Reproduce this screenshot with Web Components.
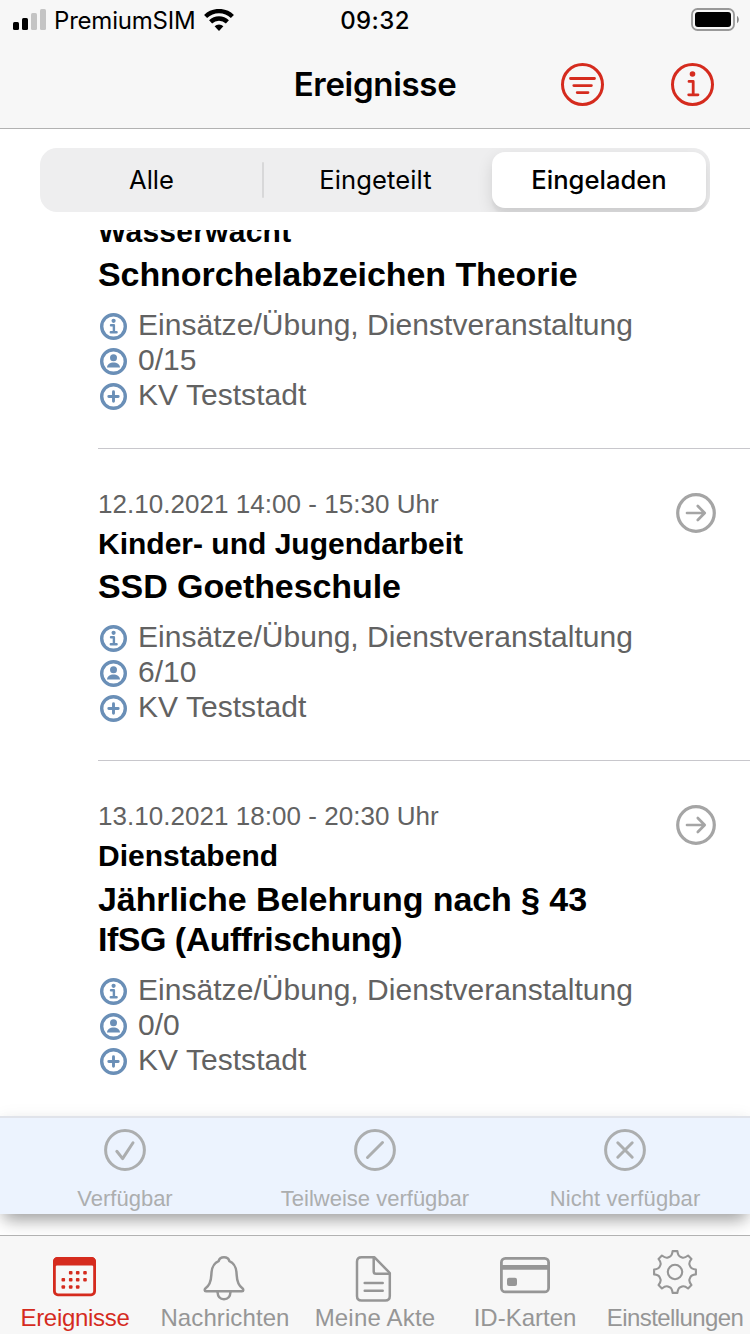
<!DOCTYPE html>
<html lang="de">
<head>
<meta charset="utf-8">
<title>Ereignisse</title>
<style>
  body {
    margin: 0;
    background: #fff;
    font-family: "Liberation Sans", Arial, sans-serif;
  }
</style>
</head>
<body>
<events-app>
  <status-bar slot="top" carrier="PremiumSIM" time="09:32"></status-bar>
  <nav-bar slot="top">Ereignisse</nav-bar>
  <segmented-control slot="filter">
    <segment-item>Alle</segment-item>
    <segment-item divider>Eingeteilt</segment-item>
    <segment-item selected>Eingeladen</segment-item>
  </segmented-control>

  <event-item>
    <span slot="category" style="letter-spacing: 0.25px">Wasserwacht</span>
    <span slot="title">Schnorchelabzeichen Theorie</span>
    <event-info icon="info">Einsätze/Übung, Dienstveranstaltung</event-info>
    <event-info icon="person">0/15</event-info>
    <event-info icon="plus">KV Teststadt</event-info>
  </event-item>
  <event-item date="12.10.2021 14:00 - 15:30 Uhr">
    <span slot="category">Kinder- und Jugendarbeit</span>
    <span slot="title">SSD Goetheschule</span>
    <event-info icon="info">Einsätze/Übung, Dienstveranstaltung</event-info>
    <event-info icon="person">6/10</event-info>
    <event-info icon="plus">KV Teststadt</event-info>
  </event-item>
  <event-item date="13.10.2021 18:00 - 20:30 Uhr" last>
    <span slot="category">Dienstabend</span>
    <span slot="title">Jährliche Belehrung nach § 43<br><span style="letter-spacing: -0.5px">IfSG (Auffrischung)</span></span>
    <event-info icon="info">Einsätze/Übung, Dienstveranstaltung</event-info>
    <event-info icon="person">0/0</event-info>
    <event-info icon="plus">KV Teststadt</event-info>
  </event-item>

  <answer-bar slot="answers">
    <answer-button icon="yes">Verfügbar</answer-button>
    <answer-button icon="partly">Teilweise verfügbar</answer-button>
    <answer-button icon="no" style="letter-spacing: 0.1px">Nicht verfügbar</answer-button>
  </answer-bar>
  <tab-bar slot="tabs">
    <tab-item icon="calendar" style="letter-spacing: -0.3px" active>Ereignisse</tab-item>
    <tab-item icon="bell" style="letter-spacing: 0.1px">Nachrichten</tab-item>
    <tab-item icon="file" style="letter-spacing: 0.2px">Meine Akte</tab-item>
    <tab-item icon="card">ID-Karten</tab-item>
    <tab-item icon="gear" style="letter-spacing: -0.6px">Einstellungen</tab-item>
  </tab-bar>
</events-app>

<script>
"use strict";

// one gear tooth, rotated eight times around the centre
const gearPath = () => {
  const point = (x, y, deg) => {
    const a = deg * Math.PI / 180;
    const px = 25 + x * Math.cos(a) - y * Math.sin(a);
    const py = 24 + x * Math.sin(a) + y * Math.cos(a);
    return `${px.toFixed(2)} ${py.toFixed(2)}`;
  };
  let d = '';
  for (let i = 0; i < 8; i++) {
    const r = i * 45;
    d += `${i ? 'L' : 'M'}${point(-5.3, -15.3, r)}`;
    d += `Q${point(-3, -16.2, r)} ${point(-2.4, -20.9, r)}`;
    d += `L${point(2.4, -20.9, r)}`;
    d += `Q${point(3, -16.2, r)} ${point(5.3, -15.3, r)}`;
  }
  return d + 'Z';
};

const dots = [
  [20.7, 24.7], [27.7, 24.7], [35, 24.7],
  [13.3, 31.7], [20.7, 31.7], [27.7, 31.7], [35, 31.7],
  [13.3, 39], [20.7, 39], [27.7, 39],
].map(([x, y]) => `<rect x="${x - 1.8}" y="${y - 1.8}" width="3.6" height="3.6" rx="1"/>`).join('');

const svg = (w, h, body, stroke = 3) => `
  <svg width="${w}" height="${h}" viewBox="0 0 ${w} ${h}" fill="none" stroke="currentColor"
    stroke-width="${stroke}" stroke-linecap="round" stroke-linejoin="round" aria-hidden="true">${body}</svg>`;

const icons = {
  // list icons
  info: svg(27, 27, `
    <circle cx="13.5" cy="13.5" r="11.8"/>
    <circle cx="13.6" cy="7.8" r="2.1" fill="currentColor" stroke="none"/>
    <path d="M11 12.2h2.9v7M10.8 19.2h5.8" stroke-width="2.4"/>`, 3.4),
  person: svg(27, 27, `
    <circle cx="13.5" cy="13.5" r="11.8"/>
    <circle cx="13.5" cy="9.7" r="3.5" fill="currentColor" stroke="none"/>
    <path d="M7 19.5c.3-3.3 3-5 6.5-5s6.2 1.700 6.500 5z" fill="currentColor" stroke="none"/>`, 3.4),
  plus: svg(27, 27, `
    <circle cx="13.5" cy="13.5" r="11.8"/>
    <path d="M13.5 8.8v9.4M8.8 13.5h9.4" stroke-width="2.9"/>`, 3.4),
  arrow: svg(40, 40, `
    <circle cx="20" cy="20" r="18.3"/>
    <path d="M11 20h17.5M21.8 13l6.9 7-6.9 7" stroke-width="2.7"/>`, 3.2),
  // header icons
  filter: svg(43, 43, `
    <circle cx="21.5" cy="21.5" r="20"/>
    <path d="M9.5 15.5h24M12.8 22.6h17.6M16.2 29.6h10.8" stroke-width="2.8"/>`),
  about: svg(43, 43, `
    <circle cx="21.5" cy="21.5" r="20"/>
    <circle cx="21.5" cy="11" r="2.8" fill="currentColor" stroke="none"/>
    <path d="M18 18.4h4.2v13.4M17.7 31.8h9.3" stroke-width="2.8"/>`),
  // answer icons
  yes: svg(42, 42, `
    <circle cx="21" cy="21" r="19.4"/>
    <path d="M12.8 22.3l5.8 7.3L29 13.8"/>`),
  partly: svg(42, 42, `
    <circle cx="21" cy="21" r="19.4"/>
    <path d="M13.500 28.500l15-15"/>`),
  no: svg(42, 42, `
    <circle cx="21" cy="21" r="19.4"/>
    <path d="M13.800 13.800l14.400 14.400M28.200 13.800L13.800 28.200"/>`),
  // tab icons
  calendar: svg(50, 54, `
    <rect x="4.4" y="10.400" width="40.200" height="36.400" rx="3.500"/>
    <path d="M3 19v-5q0-5 5-5h33q5 0 5 5v5h-2q0-1.500-2-1.500H7q-2 0-2 1.500z" fill="currentColor" stroke="none"/>
    <g fill="currentColor" stroke="none">${dots}</g>`, 2.8),
  bell: svg(50, 54, `
    <path d="M6 43.200h36c1.700 0 1.600-2 .4-3-4.200-3-5.400-6.500-5.700-13-.3-8.500-2.500-12-7.300-14-.6-2.600-2.400-4-5.400-4s-4.800 1.400-5.400 4c-4.800 2-7 5.500-7.300 14-.3 6.500-1.500 10-5.700 13-1.200 1-1.300 3 .4 3z"/>
    <path d="M17.500 44c.3 4.600 2.800 7.200 6.500 7.200s6.200-2.600 6.500-7.200"/>`, 2.5),
  file: svg(50, 54, `
    <path d="M11.500 9.300h13L39.800 25v23q0 4.500-4.500 4.500H11.500Q7 52.500 7 48V13.800q0-4.500 4.500-4.500z"/>
    <path d="M23.700 10v13.500q0 2.300 2.300 2.300h13.500M14.700 35h18M14.700 42.800h18"/>`, 2.5),
  card: svg(50, 54, `
    <rect x="1.400" y="10.400" width="47.200" height="33.500" rx="4"/>
    <path d="M2 19.300h46" stroke-width="4.700" stroke-linecap="butt"/>
    <rect x="7" y="29.700" width="10" height="8.300" rx="2" fill="currentColor" stroke="none"/>`, 2.8),
  gear: svg(50, 54, `
    <path d="${gearPath()}"/>
    <circle cx="25" cy="24" r="7.200"/>`, 2.1),
};

class BaseElement extends HTMLElement {
  constructor() {
    super();
    this.attachShadow({mode: 'open'});
  }

  connectedCallback() {
    const template = document.createElement('template');
    template.innerHTML = this.render();
    this.shadowRoot.appendChild(template.content.cloneNode(true));
  }
}

class EventsApp extends BaseElement {
  render() {
    return `
      <style>
        :host {
          display: flex;
          flex-direction: column;
          width: 750px;
          height: 1334px;
          overflow: hidden;
        }
        .filter { padding: 19px 40px 18px; }
        .list {
          height: 886px;
          overflow: hidden;
        }
        /* the list is scrolled, its first row is cut at the top */
        .rows { margin-top: -18px; }
        .tabs { margin-top: auto; }
      </style>
      <slot name="top"></slot>
      <div class="filter"><slot name="filter"></slot></div>
      <div class="list"><div class="rows"><slot></slot></div></div>
      <slot name="answers"></slot>
      <div class="tabs"><slot name="tabs"></slot></div>
    `;
  }
}

class StatusBar extends BaseElement {
  render() {
    return `
      <style>
        :host {
          display: grid;
          grid-template-columns: 1fr auto 1fr;
          align-items: center;
          height: 38px;
          padding: 0 11px 2px 13px;
          background: #f7f7f7;
          font: 24px/38px Inter, sans-serif;
        }
        .left, .right { display: flex; align-items: center; }
        .left { gap: 8px; }
        .right { justify-content: flex-end; }
        .carrier { letter-spacing: -0.2px; padding-top: 2px; }
        .time { font-weight: 500; padding-top: 2px; margin-right: 2px; letter-spacing: 0.4px; }
        svg { display: block; }
      </style>
      <div class="left">
        <svg width="33" height="22" viewBox="0 0 33 22">
          <rect y="13" width="6" height="8" rx="1.5"/>
          <rect x="9" y="9" width="6" height="12" rx="1.5"/>
          <rect x="18" y="4" width="6" height="17" rx="1.5" fill="#c4c4c4"/>
          <rect x="27" y="0" width="6" height="21" rx="1.5" fill="#c4c4c4"/>
        </svg>
        <span class="carrier">${this.getAttribute('carrier')}</span>
        <svg width="30" height="22" viewBox="0 0 30 22" fill="none" stroke="#000" stroke-width="4.4">
          <path d="M1.6 7.500a19.300 19.300 0 0 1 26.800 0"/>
          <path d="M6.600 12.900a12.200 12.200 0 0 1 16.800 0"/>
          <path d="M15 22l-4.400-4.700a6.400 6.400 0 0 1 8.800 0z" fill="#000" stroke="none"/>
        </svg>
      </div>
      <span class="time">${this.getAttribute('time')}</span>
      <div class="right">
        <svg width="48" height="24" viewBox="0 0 48 24">
          <rect x="1" y="1" width="42" height="21" rx="5.5" fill="none" stroke="#999" stroke-width="1.8"/>
          <rect x="4" y="4" width="36" height="15" rx="3"/>
          <path d="M46 8c2.400 1.200 2.400 6 0 7.200z" fill="#888"/>
        </svg>
      </div>
    `;
  }
}

class NavBar extends BaseElement {
  render() {
    return `
      <style>
        :host {
          display: grid;
          grid-template-columns: 1fr auto 1fr;
          align-items: center;
          height: 88px;
          padding: 0 36px;
          background: #f7f7f7;
          border-bottom: 1px solid #b2b2b2;
        }
        h1 {
          grid-column: 2;
          margin: 0;
          font: 600 33px/40px Inter, sans-serif;
          letter-spacing: -0.3px;
        }
        .actions {
          display: flex;
          justify-content: flex-end;
          gap: 67px;
          color: #d52b1e;
        }
        svg { display: block; }
      </style>
      <h1><slot></slot></h1>
      <div class="actions">${icons.filter}${icons.about}</div>
    `;
  }
}

class SegmentedControl extends BaseElement {
  render() {
    return `
      <style>
        :host {
          display: flex;
          box-sizing: border-box;
          height: 64px;
          padding: 4px;
          border-radius: 17px;
          background: #eeeeef;
          overflow: hidden;
        }
      </style>
      <slot></slot>
    `;
  }
}

class SegmentItem extends BaseElement {
  render() {
    return `
      <style>
        :host {
          display: flex;
          box-sizing: border-box;
          flex: 1 1 0;
          align-items: center;
          padding-right: 3px;
          font: 25.6px/56px Inter, sans-serif;
        }
        :host([divider]) {
          flex: 0 0 230px;
          padding-right: 5px;
          letter-spacing: 0.1px;
        }
        :host([divider])::before {
          content: "";
          width: 2px;
          height: 36px;
          border-radius: 1px;
          background: #d8d8d9;
        }
        :host([selected]) {
          flex: 0 0 214px;
          padding-right: 0;
          border-radius: 13px;
          background: #fff;
          box-shadow: 0 6px 16px rgba(0, 0, 0, .12), 0 6px 2px rgba(0, 0, 0, .04);
          font-weight: 500;
        }
        .label { flex: 1; text-align: center; }
      </style>
      <span class="label"><slot></slot></span>
    `;
  }
}

class EventItem extends BaseElement {
  render() {
    const date = this.getAttribute('date');
    return `
      <style>
        :host {
          display: flex;
          justify-content: space-between;
          align-items: flex-start;
          margin-left: 98px;
          padding: 0 34px 36px 0;
          border-bottom: 1px solid #c8c7cc;
        }
        :host([date]) { padding-top: 39px; }
        :host([last]) { border-bottom: 0; }
        .date {
          margin-bottom: 4px;
          color: #626262;
          font-size: 26px;
          line-height: 32px;
          letter-spacing: 0.04px;
        }
        .category {
          font-size: 30px;
          font-weight: bold;
          line-height: 40px;
        }
        .title {
          margin: 2px 0 13px;
          font-size: 34px;
          font-weight: bold;
          line-height: 40px;
          letter-spacing: -0.08px;
        }
        :host([last]) .title { margin-top: 3px; }
        .open { padding-top: 5px; color: #a5a5a5; }
        svg { display: block; }
      </style>
      <div>
        ${date ? `<div class="date">${date}</div>` : ''}
        <div class="category"><slot name="category"></slot></div>
        <div class="title"><slot name="title"></slot></div>
        <slot></slot>
      </div>
      ${date ? `<div class="open">${icons.arrow}</div>` : ''}
    `;
  }
}

class EventInfo extends BaseElement {
  render() {
    return `
      <style>
        :host {
          display: flex;
          align-items: center;
          gap: 11px;
          height: 35px;
          padding-left: 2px;
          color: #626262;
          font-size: 30px;
          line-height: 35px;
          letter-spacing: 0.04px;
        }
        .icon { padding-top: 3px; color: #6a8fb7; }
        svg { display: block; }
      </style>
      <span class="icon">${icons[this.getAttribute('icon')]}</span>
      <span><slot></slot></span>
    `;
  }
}

class AnswerBar extends BaseElement {
  render() {
    return `
      <style>
        :host {
          display: flex;
          box-sizing: border-box;
          height: 98px;
          border-top: 2px solid #e0e3ea;
          background: #ecf3fe;
          box-shadow: 0 10px 16px -4px rgba(0, 0, 0, .36), 0 0 16px rgba(0, 0, 0, .05);
        }
      </style>
      <slot></slot>
    `;
  }
}

class AnswerButton extends BaseElement {
  render() {
    return `
      <style>
        :host {
          display: flex;
          flex: 1;
          flex-direction: column;
          align-items: center;
          gap: 14px;
          padding-top: 11px;
          color: #acaeaf;
          font-size: 22px;
          line-height: 28px;
        }
        svg { display: block; }
      </style>
      ${icons[this.getAttribute('icon')]}
      <span><slot></slot></span>
    `;
  }
}

class TabBar extends BaseElement {
  render() {
    return `
      <style>
        :host {
          display: flex;
          height: 98px;
          border-top: 1px solid #b2b2b2;
          background: #f7f7f7;
        }
      </style>
      <slot></slot>
    `;
  }
}

class TabItem extends BaseElement {
  render() {
    return `
      <style>
        :host {
          display: flex;
          flex: 1 1 0;
          flex-direction: column;
          align-items: center;
          gap: 2px;
          padding-top: 12px;
          color: #969696;
          font-size: 24px;
          line-height: 28px;
          white-space: nowrap;
        }
        :host([active]) { color: #d52b1e; }
        svg { display: block; flex: none; }
      </style>
      ${icons[this.getAttribute('icon')]}
      <span><slot></slot></span>
    `;
  }
}

customElements.define('events-app', EventsApp);
customElements.define('status-bar', StatusBar);
customElements.define('nav-bar', NavBar);
customElements.define('segmented-control', SegmentedControl);
customElements.define('segment-item', SegmentItem);
customElements.define('event-item', EventItem);
customElements.define('event-info', EventInfo);
customElements.define('answer-bar', AnswerBar);
customElements.define('answer-button', AnswerButton);
customElements.define('tab-bar', TabBar);
customElements.define('tab-item', TabItem);
</script>
</body>
</html>
